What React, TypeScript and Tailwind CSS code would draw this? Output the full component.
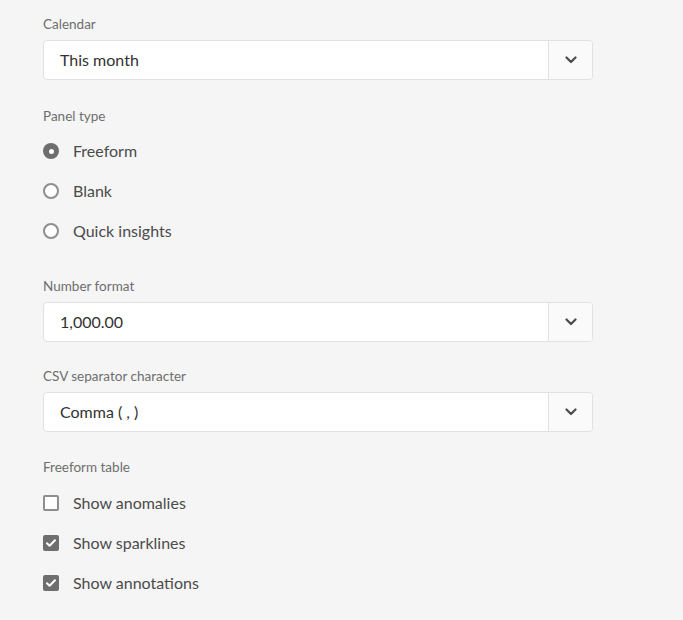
import React from 'react'

const font = { fontFamily: 'Lato, "Noto Sans", sans-serif' }

/* ── Field label ─────────────────────────────────────────── */
function FieldLabel({ children }: { children: React.ReactNode }) {
  return <div className="h-[18px] text-[13.5px] leading-[18px] text-[#6e6e6e] mb-[7px]">{children}</div>
}

/* ── Picker ──────────────────────────────────────────────── */
function Picker({ value }: { value: string }) {
  return (
    <div className="flex h-10 w-[550px] rounded-[4px] border border-[#e1e1e1] bg-white overflow-hidden">
      <div className="flex-1 flex items-center pl-4 text-[16px] text-[#323232]">{value}</div>
      <div className="w-11 flex items-center justify-center border-l border-[#e1e1e1] bg-[#fafafa]">
        <svg width="12" height="8" viewBox="0 0 12 8" fill="none">
          <path d="M1.5 1.5 6 6l4.5-4.5" stroke="#4b4b4b" strokeWidth="2.2" strokeLinecap="round" strokeLinejoin="round" />
        </svg>
      </div>
    </div>
  )
}

/* ── Radio ───────────────────────────────────────────────── */
function Radio({ label, checked }: { label: string; checked?: boolean }) {
  return (
    <div className="flex items-center h-10">
      {checked ? (
        <span className="w-4 h-4 rounded-full bg-[#6e6e6e] flex items-center justify-center">
          <span className="w-[5px] h-[5px] rounded-full bg-white" />
        </span>
      ) : (
        <span className="w-4 h-4 rounded-full border-2 border-[#8e8e8e] bg-white" />
      )}
      <span className="ml-[14px] text-[16px] text-[#4b4b4b]">{label}</span>
    </div>
  )
}

/* ── Checkbox ────────────────────────────────────────────── */
function Checkbox({ label, checked }: { label: string; checked?: boolean }) {
  return (
    <div className="flex items-center h-10">
      {checked ? (
        <span className="w-4 h-4 rounded-[2px] bg-[#6e6e6e] flex items-center justify-center">
          <svg width="12" height="10" viewBox="0 0 12 10" fill="none">
            <path d="M2 5.2 4.6 7.8 10 2.2" stroke="white" strokeWidth="2" strokeLinecap="round" strokeLinejoin="round" />
          </svg>
        </span>
      ) : (
        <span className="w-4 h-4 rounded-[2px] border-2 border-[#8e8e8e] bg-white" />
      )}
      <span className="ml-[14px] text-[16px] text-[#4b4b4b]">{label}</span>
    </div>
  )
}

export default function App() {
  return (
    <div className="min-h-[620px] w-[683px] bg-[#f5f5f5] pl-[43px] pt-[15px]" style={font}>
      <FieldLabel>Calendar</FieldLabel>
      <Picker value="This month" />

      <div className="mt-[27px]">
        <FieldLabel>Panel type</FieldLabel>
        <div className="-mt-[1px]">
          <Radio label="Freeform" checked />
          <Radio label="Blank" />
          <Radio label="Quick insights" />
        </div>
      </div>

      <div className="mt-[26px]">
        <FieldLabel>Number format</FieldLabel>
        <Picker value="1,000.00" />
      </div>

      <div className="mt-[25px]">
        <FieldLabel>CSV separator character</FieldLabel>
        <Picker value="Comma ( , )" />
      </div>

      <div className="mt-[26px]">
        <FieldLabel>Freeform table</FieldLabel>
        <div>
          <Checkbox label="Show anomalies" />
          <Checkbox label="Show sparklines" checked />
          <Checkbox label="Show annotations" checked />
        </div>
      </div>
    </div>
  )
}
